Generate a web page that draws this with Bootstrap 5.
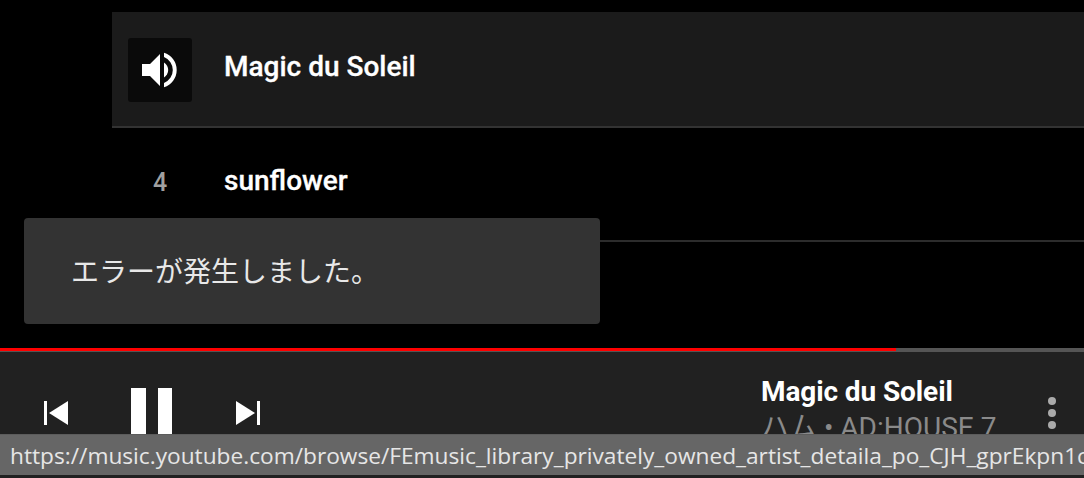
<!DOCTYPE html>
<html lang="en">
<head>
<meta charset="UTF-8">
<title>Player</title>
<link href="https://cdn.jsdelivr.net/npm/bootstrap@5.3.0/dist/css/bootstrap.min.css" rel="stylesheet">
<style>
    html, body { height: 100%; }
    body {
        background: #000;
        overflow: hidden;
        font-family: Roboto, "Noto Sans CJK JP", sans-serif;
        color: #fff;
    }
    .page-wrap { width: 1084px; height: 478px; position: relative; overflow: hidden; }
    .track-list { padding: 12px 0 0 112px; height: 348px; }
    .track-row { height: 114px; border-bottom: 2px solid #2c2c2c; }
    .track-row.current { height: 116px; background: #1b1b1b; border-bottom-color: #333; }
    .track-icon { width: 64px; height: 64px; margin: 2px 0 0 16px; background: #0a0a0a; border-radius: 3px; }
    .track-num { width: 64px; margin: -2px 0 0 16px; text-align: center; font-size: 25px; font-weight: 500; color: #a0a0a0; }
    .track-title { margin: -5px 0 0 32px; font-size: 28px; font-weight: 500; -webkit-text-stroke: .3px #fff; }
    .track-title.lower { margin-top: -7px; }
    .error-toast {
        position: absolute; left: 24px; top: 218px; width: 576px; height: 106px;
        background: #333; border-radius: 4px; padding: 0 0 3px 47px;
        font-size: 28px; color: #e8e8e8;
        font-family: "Noto Sans CJK JP", sans-serif;
    }
    .seek-bar { height: 4px; background: #555; }
    .seek-fill { height: 3px; width: 896px; background: #f00; }
    .player-bar { height: 126px; background: #212121; position: relative; }
    .transport { position: absolute; left: 43px; top: 36px; }
    .btn-side { margin-top: 12px; }
    .btn-play { margin: 0 63px 0 62px; }
    .now-playing { position: absolute; left: 761px; top: 22px; white-space: nowrap; }
    .np-title { font-size: 28px; font-weight: 700; line-height: 36px; letter-spacing: -.1px; }
    .np-sub { font-size: 28px; line-height: 36px; color: #8a8a8a; }
    .more-btn { position: absolute; left: 1046px; top: 43px; }
    .status-tip {
        position: absolute; left: 0; top: 434px; width: 1084px; height: 41px;
        background: #666; color: #e6e6e6; padding-left: 10px;
        font-family: "Open Sans", sans-serif; font-size: 22.7px; line-height: 42px;
        white-space: nowrap; overflow: hidden; border-top: 1px solid #5c5c5c;
    }
</style>
</head>
<body>
<div class="page-wrap">
    <div class="track-list">
        <div class="track-row current d-flex align-items-center">
            <div class="track-icon d-flex align-items-center justify-content-center">
                <svg width="48" height="48" viewBox="0 0 24 24" fill="#fff"><path d="M3 9v6h4l5 5V4L7 9H3z"/><path d="M14 8.2a4.5 4.5 0 0 1 0 7.6z"/><path d="M14 3.4v2.1a7 7 0 0 1 0 13v2.1a9 9 0 0 0 0-17.2z"/></svg>
            </div>
            <div class="track-title">Magic du Soleil</div>
        </div>
        <div class="track-row d-flex align-items-center">
            <div class="track-num">4</div>
            <div class="track-title lower">sunflower</div>
        </div>
    </div>

    <div class="error-toast d-flex align-items-center">エラーが発生しました。</div>

    <div class="seek-bar"><div class="seek-fill"></div></div>
    <div class="player-bar">
        <div class="transport d-flex align-items-start">
            <svg class="btn-side" width="26" height="26" viewBox="0 0 26 26" fill="#fff"><rect x="1" y="1" width="3" height="24"/><path d="M25 1v24L6 13z"/></svg>
            <svg class="btn-play" width="41" height="60" viewBox="0 0 41 60" fill="#fff"><rect x="0" y="0" width="15" height="60"/><rect x="27" y="0" width="14" height="60"/></svg>
            <svg class="btn-side" width="26" height="26" viewBox="0 0 26 26" fill="#fff"><rect x="22" y="1" width="3" height="24"/><path d="M1 1v24l19-12z"/></svg>
        </div>
        <div class="now-playing">
            <div class="np-title">Magic du Soleil</div>
            <div class="np-sub">ハム • AD:HOUSE 7</div>
        </div>
        <svg class="more-btn" width="12" height="36" viewBox="0 0 12 36" fill="#aaa"><circle cx="6" cy="6" r="4"/><circle cx="6" cy="18" r="4"/><circle cx="6" cy="30" r="4"/></svg>
    </div>

    <div class="status-tip">https://music.youtube.com/browse/FEmusic_library_privately_owned_artist_detaila_po_CJH_gprEkpn1c</div>
</div>
<script src="https://cdn.jsdelivr.net/npm/bootstrap@5.3.0/dist/js/bootstrap.bundle.min.js"></script>
</body>
</html>
